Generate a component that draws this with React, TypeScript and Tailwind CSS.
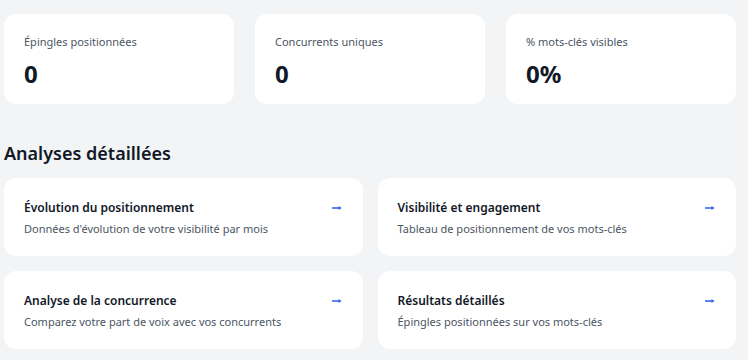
const stats = [
  { label: "Épingles positionnées", value: "0" },
  { label: "Concurrents uniques", value: "0" },
  { label: "% mots-clés visibles", value: "0%" },
];

const analyses = [
  {
    title: "Évolution du positionnement",
    description: "Données d'évolution de votre visibilité par mois",
  },
  {
    title: "Visibilité et engagement",
    description: "Tableau de positionnement de vos mots-clés",
  },
  {
    title: "Analyse de la concurrence",
    description: "Comparez votre part de voix avec vos concurrents",
  },
  {
    title: "Résultats détaillés",
    description: "Épingles positionnées sur vos mots-clés",
  },
];

function ArrowRight() {
  return (
    <svg width="10" height="6" viewBox="0 0 10 6" className="text-[#3b63f0]">
      <path d="M0 3h8.5" stroke="currentColor" strokeWidth="1.6" />
      <path d="M6.5 1l3 2-3 2z" fill="currentColor" />
    </svg>
  );
}

export default function App() {
  return (
    <div
      className="min-h-[360px] bg-[#f3f4f6] pt-[14px] pl-1"
      style={{ fontFamily: '"Noto Sans", "Open Sans", sans-serif' }}
    >
      <div className="w-[732px]">
        {/* stat cards */}
        <div className="grid grid-cols-3 gap-[21px]">
          {stats.map((s) => (
            <div
              key={s.label}
              className="h-[90px] rounded-xl bg-white px-5 pt-5"
            >
              <p className="text-[11px] leading-4 text-[#4b5563]">{s.label}</p>
              <p className="mt-2 text-2xl leading-8 font-bold text-[#111827]">
                {s.value}
              </p>
            </div>
          ))}
        </div>

        <h2 className="mt-[35px] text-lg leading-7 font-semibold text-[#111827]">
          Analyses détaillées
        </h2>

        {/* analysis cards */}
        <div className="mt-[11px] grid grid-cols-2 gap-[15px]">
          {analyses.map((a) => (
            <div
              key={a.title}
              className="h-[78px] cursor-pointer rounded-xl bg-white pl-5 pr-[21px] pt-5"
            >
              <div className="flex items-center justify-between">
                <h3 className="text-xs leading-5 font-semibold text-[#111827]">
                  {a.title}
                </h3>
                <ArrowRight />
              </div>
              <p className="mt-[3px] text-[11px] leading-4 text-[#4b5563]">
                {a.description}
              </p>
            </div>
          ))}
        </div>
      </div>
    </div>
  );
}
